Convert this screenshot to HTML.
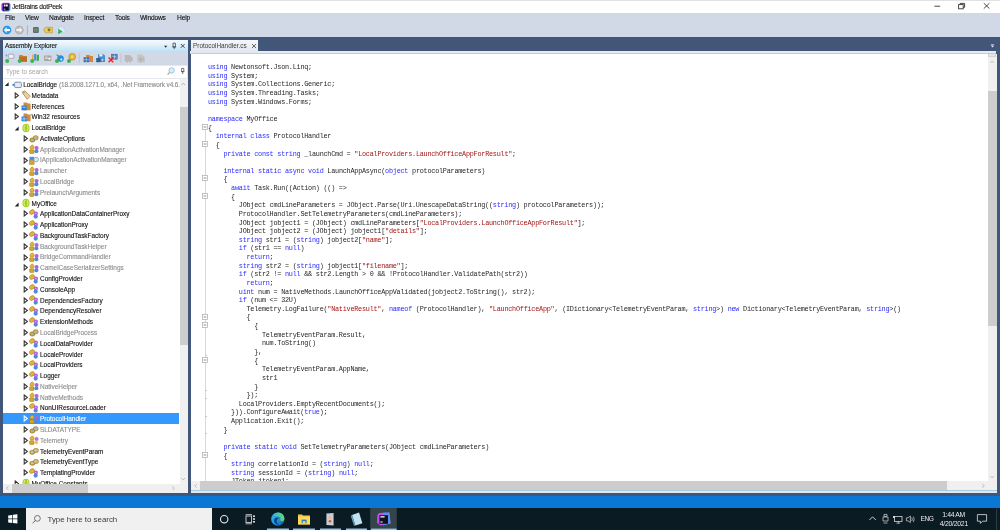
<!DOCTYPE html><html><head><meta charset="utf-8"><style>
*{margin:0;padding:0;box-sizing:border-box}
html,body{width:1000px;height:530px;overflow:hidden;background:#fff;font-family:"Liberation Sans",sans-serif;position:relative}
#root{left:0;top:0;width:1000px;height:530px;overflow:hidden;filter:blur(0.3px)}
div{position:absolute}
#title{left:0;top:0;width:1000px;height:12.7px;background:#fff;border-top:1.2px solid #e2e2e2}
#title .tx{left:12px;top:0.6px;font-size:6.7px;line-height:10px;color:#111;letter-spacing:-0.24px;-webkit-text-stroke:0.1px #111}
#menu{left:0;top:13px;width:1000px;height:24px;background:#d1d8e6}
.mi{top:0.4px;font-size:6.7px;line-height:10px;color:#111;letter-spacing:-0.2px;-webkit-text-stroke:0.1px #111}
#frame{left:0;top:37px;width:1000px;height:460px;background:#42567a}
#panel{left:3px;top:40px;width:185px;height:452.6px;background:#fff}
#ph{left:0;top:0;width:185px;height:11px;background:linear-gradient(#f6fafd,#eaf5fc 30%,#bfe3f8)}
#ph .tx{left:2px;top:0.8px;font-size:6.5px;line-height:10px;color:#111;letter-spacing:-0.12px;-webkit-text-stroke:0.1px #111}
#ptb{left:0;top:11px;width:185px;height:13.7px;background:#d1d8e6}
#psearch{left:0;top:24.7px;width:185px;height:14.5px;background:#fff;border-top:1.8px solid #e4e8ee;border-bottom:1.4px solid #e4e8ee;border-right:1.8px solid #dfe4ec}
#psearch .tx{left:3px;top:1.6px;font-size:6.4px;line-height:9px;color:#a6a6a6}
#tree{left:0;top:39px;width:176.5px;height:404.6px;overflow:hidden}
.tr{left:-3px;width:179px;height:10.78px;top:0}
.tr.sel{background:#3399ff}
.tt{top:0.8px;font-size:6.45px;line-height:10.78px;color:#111;white-space:nowrap;-webkit-text-stroke:0.12px currentColor}
.g .tt{color:#8d8d8d}
.sel .tt{color:#fff}
.gv{color:#8d8d8d;letter-spacing:-0.12px}
.ex{top:1.9px;width:6px;height:7px}
.ex svg{position:absolute;left:0;top:0}
.exc{left:1px;top:0;width:0;height:0;border-left:3.5px solid #555;border-top:2.6px solid transparent;border-bottom:2.6px solid transparent}
.exc:after{content:"";position:absolute;left:-2.7px;top:-1.3px;width:0;height:0;border-left:1.8px solid #fff;border-top:1.3px solid transparent;border-bottom:1.3px solid transparent}
.sel .exc:after{border-left-color:#3399ff}
.exo{left:0;top:0.5px;width:0;height:0;border-right:4px solid #333;border-top:4px solid transparent}
.ic{position:absolute;top:0.4px;width:10px;height:10px}
.ic-cls{background:radial-gradient(circle at 30% 35%,#e8b94a 0 35%,transparent 36%),radial-gradient(circle at 70% 65%,#8a6fd0 0 30%,transparent 31%),linear-gradient(#e0a93a,#c88a20);border-radius:2px;opacity:.85}
.ic-pcls{background:radial-gradient(circle at 28% 30%,#e9b846 0 38%,transparent 39%),radial-gradient(circle at 68% 68%,#6f7ee0 0 32%,transparent 33%);}
.ic-itf{background:linear-gradient(#6ea6e6,#4a7cc7);border-radius:2px;opacity:.8}
.ic-str{background:linear-gradient(#cda24a,#a97b25);border-radius:1px;transform:skewX(-15deg) scale(.8,.7)}
.ic-enm{background:linear-gradient(#d6b060,#b08a30);border-radius:2px;transform:scale(.8,.6)}
.ic-ns{width:7px;height:8px;margin-left:1px;background:#a8d13a;border-radius:50%}
.ic-asm{background:linear-gradient(#e6ecf4,#b9c6d8);border:1px solid #7f91ab;border-radius:1px;transform:scale(.8,.7)}
.ic-tag{background:linear-gradient(135deg,#e9d3a8,#c9a56b);transform:rotate(45deg) scale(.6,.8)}
.ic-ref{background:linear-gradient(90deg,#2f7be0 0 55%,#d09a45 55%)}
.ic-res{background:linear-gradient(90deg,#2f7be0 0 55%,#d09a45 55%)}
#pvs{left:176.5px;top:39.2px;width:8.5px;height:404.4px;background:#f0f0f0}
#pvs .th{left:0;top:28px;width:8px;height:238px;background:#cdcdcd}
#phs{left:0;top:443.6px;width:176.5px;height:9px;background:#f0f0f0}
#phs .th{left:8.8px;top:0;width:75.8px;height:9px;background:#cdcdcd}
#pcorner{left:176.5px;top:443.6px;width:8.5px;height:9px;background:#f0f0f0}
#editor{left:191px;top:40px;width:805px;height:452px;background:#fff}
#tab{left:0;top:0;width:67px;height:13px;background:linear-gradient(#f5f7fb,#dfe5ee)}
#tab .tx{left:2px;top:0.8px;font-size:6.4px;line-height:9px;color:#3c3c3c}
#tabline{left:-1px;top:10.5px;width:806px;height:3.5px;background:linear-gradient(#e6eaf1 0 55%,#b6d1e3 55%)}
#tabstrip{left:67px;top:0;width:738px;height:10.5px;background:#42567a}
#codewrap{left:0;top:0;width:1000px;height:530px}
.cl{font-family:"Liberation Mono",monospace;font-size:6.8px;letter-spacing:-0.23px;line-height:8px;white-space:pre;color:#262626}
.cl b{font-weight:normal;color:#2b2bff}
.cl i{font-style:normal;color:#a31515}
#gline{left:204.6px;top:127px;width:1px;height:354px;background:#d8d8d8}
.tk{left:205px;width:2px;height:0.8px;background:#c8c8c8}
.fb{position:absolute;left:202.1px;width:6px;height:6px}
#evs{left:987.6px;top:54px;width:9px;height:427px;background:#f0f0f0}
#evs .th{left:0;top:36.5px;width:9px;height:235px;background:#cdcdcd}
#ehs{left:191px;top:481.2px;width:805.6px;height:8.6px;background:#f0f0f0}
#ehs .th{left:9px;top:0;width:747px;height:9px;background:#cdcdcd}
#ebl{left:191px;top:489.8px;width:805.6px;height:3.2px;background:linear-gradient(#a9cbe2 0 40%,#e2e8f0 40%)}
#bluebar{left:0;top:495.6px;width:1000px;height:13px;background:#0a77d4}
#taskbar{left:0;top:508.3px;width:1000px;height:22px;background:#0b1b23}
#search{left:26px;top:0;width:185.5px;height:22px;background:#f0f0f0}
#search .tx{left:21.5px;top:6.6px;font-size:7.9px;line-height:10px;color:#3c3c3c}
</style></head><body><div id="root"><svg width="0" height="0" style="position:absolute"><defs>
<symbol id="i-asm" viewBox="0 0 10 10"><rect x="2.6" y="2.2" width="6.8" height="5.4" rx="1.2" fill="#e3ebf5" stroke="#6f86a8" stroke-width="0.9"/><circle cx="1.3" cy="4.9" r="1.1" fill="#3d9be0"/></symbol>
<symbol id="i-tag" viewBox="0 0 10 10"><path d="M1 2.2 L4 0.8 L9.3 6.2 L6.2 9.3 Z" fill="#e6d0a4" stroke="#a88554" stroke-width="0.8"/><circle cx="3" cy="2.6" r="0.7" fill="#a88554"/></symbol>
<symbol id="i-ref" viewBox="0 0 10 10"><path d="M2.5 1.5 H6 L6.8 2.5 H9.6 V9.2 H2.5 Z" fill="#d18b3a"/><rect x="0.5" y="4.5" width="5.2" height="4.8" fill="#2f7fe0"/><rect x="1.5" y="5.8" width="3.2" height="0.8" fill="#bfe0ff"/></symbol>
<symbol id="i-res" viewBox="0 0 10 10"><path d="M2.5 1.5 H6 L6.8 2.5 H9.6 V9.2 H2.5 Z" fill="#d18b3a"/><rect x="0.5" y="4.5" width="5.2" height="4.8" fill="#2f7fe0"/><path d="M3.1 4.8 V9.2 M0.8 6.9 H5.5" stroke="#d8ecff" stroke-width="0.6"/></symbol>
<symbol id="i-ns" viewBox="0 0 10 10"><ellipse cx="5" cy="5" rx="3.6" ry="4.3" fill="#a9cf1f"/><path d="M4.2 2.2 Q3 2.4 3.3 3.8 Q3.4 4.8 2.6 5 Q3.4 5.2 3.3 6.2 Q3 7.6 4.2 7.8 M5.8 2.2 Q7 2.4 6.7 3.8 Q6.6 4.8 7.4 5 Q6.6 5.2 6.7 6.2 Q7 7.6 5.8 7.8" fill="none" stroke="#f4ffd0" stroke-width="0.7"/></symbol>
<symbol id="i-str" viewBox="0 0 10 10"><rect x="0.8" y="4" width="5" height="4" rx="2" fill="#c9a347" stroke="#94701f" stroke-width="0.7"/><rect x="4.2" y="1.8" width="5" height="4" rx="2" fill="#d9b95c" stroke="#94701f" stroke-width="0.7"/><rect x="5.4" y="3" width="2.6" height="1.6" fill="#9fb7c9"/><rect x="2" y="5.2" width="2.6" height="1.6" fill="#9fb7c9"/></symbol>
<symbol id="i-enm" viewBox="0 0 10 10"><rect x="0.8" y="4.4" width="5" height="3.8" rx="1.6" fill="#c9a347" stroke="#94701f" stroke-width="0.6"/><rect x="4.4" y="2.6" width="5" height="3.8" rx="1.6" fill="#d6b65a" stroke="#94701f" stroke-width="0.6"/><rect x="5.6" y="3.6" width="2.6" height="1.6" fill="#b9c9d4"/><rect x="2" y="5.4" width="2.6" height="1.6" fill="#b9c9d4"/></symbol>
<symbol id="i-cls" viewBox="0 0 10 10"><path d="M0.8 3 L3 0.8 L5.2 2.6 L4.6 4.8 L1.6 5 Z" fill="#e4b63c" stroke="#a77d12" stroke-width="0.55"/><rect x="0.6" y="5.8" width="4.4" height="3.6" rx="0.6" fill="#d6a62e" stroke="#a77d12" stroke-width="0.55"/><circle cx="7.6" cy="3.9" r="2" fill="#b85ddd"/><circle cx="7.4" cy="7.3" r="2" fill="#4f89d8"/></symbol>
<symbol id="i-pcls" viewBox="0 0 10 10"><ellipse cx="3" cy="3" rx="2.7" ry="2.1" transform="rotate(-35 3 3)" fill="#e2b43a" stroke="#a77d12" stroke-width="0.55"/><circle cx="6.9" cy="4.6" r="2.1" fill="#b85ddd"/><circle cx="6.7" cy="7.6" r="2.1" fill="#4f89d8"/><circle cx="6.9" cy="4.6" r="0.7" fill="#e6c4f2"/></symbol>
<symbol id="i-itf" viewBox="0 0 10 10"><rect x="0.5" y="1.8" width="4.6" height="3.6" fill="#4f8fdc"/><rect x="0.5" y="5.6" width="4.6" height="3.8" fill="#d3a42c" stroke="#a77d12" stroke-width="0.5"/><circle cx="7.2" cy="4.6" r="2.3" fill="#dfe6ee" stroke="#8a9db3" stroke-width="0.8"/></symbol>
<symbol id="i-ctl" viewBox="0 0 10 10"><path d="M0.8 3 L3 0.8 L5.2 2.6 L4.6 4.8 L1.6 5 Z" fill="#e4b63c" stroke="#a77d12" stroke-width="0.55"/><rect x="0.6" y="5.8" width="4.4" height="3.6" rx="0.6" fill="#d6a62e" stroke="#a77d12" stroke-width="0.55"/><circle cx="7.6" cy="3.9" r="2" fill="#c66ae0"/><path d="M7.4 5.4 L9.4 7.4 L7.4 9.4 L5.4 7.4 Z" fill="#e7c23a"/></symbol>
</defs></svg><div id="title"><svg style="position:absolute;left:1px;top:1px" width="10" height="10" viewBox="0 0 10 10"><defs><linearGradient id="dpg" x1="0" y1="0" x2="1" y2="1"><stop offset="0" stop-color="#d23cf0"/><stop offset="0.5" stop-color="#7a3cf0"/><stop offset="1" stop-color="#21b6f2"/></linearGradient></defs><path d="M1.6 0.8 H8.2 L9.4 2.4 V8 L7.6 9.6 H1.8 L0.4 8 V2.2 Z" fill="url(#dpg)"/><rect x="1.8" y="1.8" width="6" height="6.6" fill="#0e0a1a"/><path d="M2.8 2.6 H4.6 V4.6 H2.8 Z M5 2.6 H6.8 V4.6 H5 Z M2.8 6.8 H4.4 V7.4 H2.8 Z" fill="#f0f0f0"/></svg><div class="tx">JetBrains dotPeek</div></div><div id="menu"><div class="mi" style="left:5px">File</div><div class="mi" style="left:25px">View</div><div class="mi" style="left:49px">Navigate</div><div class="mi" style="left:84px">Inspect</div><div class="mi" style="left:115px">Tools</div><div class="mi" style="left:140px">Windows</div><div class="mi" style="left:177px">Help</div></div><div id="frame"></div><div id="panel"><div id="ph"><div class="tx">Assembly Explorer</div></div><div id="ptb"></div><div id="psearch"><div class="tx">Type to search</div></div><div id="tree"><div class="tr" style="top:0.21px"><div class="ex" style="left:4.2px"><svg width="6" height="7" viewBox="0 0 6 7"><path d="M4.6 1.2 L4.6 5.0 L0.8 5.0 Z" fill="#222"/></svg></div><svg class="ic" style="left:12.0px" width="10" height="10" viewBox="0 0 10 10"><use href="#i-asm"/></svg><div class="tt" style="left:23.2px">LocalBridge <span class="gv">(18.2008.1271.0, x64, .Net Framework v4.6.1</span></div></div><div class="tr" style="top:10.99px"><div class="ex" style="left:14.0px"><svg width="6" height="7" viewBox="0 0 6 7"><path d="M1.2 1 L4.4 3.5 L1.2 6 Z" fill="none" stroke="#333" stroke-width="1.05"/></svg></div><svg class="ic" style="left:20.5px" width="10" height="10" viewBox="0 0 10 10"><use href="#i-tag"/></svg><div class="tt" style="left:31.6px">Metadata</div></div><div class="tr" style="top:21.77px"><div class="ex" style="left:14.0px"><svg width="6" height="7" viewBox="0 0 6 7"><path d="M1.2 1 L4.4 3.5 L1.2 6 Z" fill="none" stroke="#333" stroke-width="1.05"/></svg></div><svg class="ic" style="left:20.5px" width="10" height="10" viewBox="0 0 10 10"><use href="#i-ref"/></svg><div class="tt" style="left:31.6px">References</div></div><div class="tr" style="top:32.55px"><div class="ex" style="left:14.0px"><svg width="6" height="7" viewBox="0 0 6 7"><path d="M1.2 1 L4.4 3.5 L1.2 6 Z" fill="none" stroke="#333" stroke-width="1.05"/></svg></div><svg class="ic" style="left:20.5px" width="10" height="10" viewBox="0 0 10 10"><use href="#i-res"/></svg><div class="tt" style="left:31.6px">Win32 resources</div></div><div class="tr" style="top:43.33px"><div class="ex" style="left:14.0px"><svg width="6" height="7" viewBox="0 0 6 7"><path d="M4.6 2.6 L4.6 6.4 L0.8 6.4 Z" fill="#222"/></svg></div><svg class="ic" style="left:20.5px" width="10" height="10" viewBox="0 0 10 10"><use href="#i-ns"/></svg><div class="tt" style="left:31.6px">LocalBridge</div></div><div class="tr" style="top:54.11px"><div class="ex" style="left:22.5px"><svg width="6" height="7" viewBox="0 0 6 7"><path d="M1.2 1 L4.4 3.5 L1.2 6 Z" fill="none" stroke="#333" stroke-width="1.05"/></svg></div><svg class="ic" style="left:29.0px" width="10" height="10" viewBox="0 0 10 10"><use href="#i-str"/></svg><div class="tt" style="left:40.0px">ActivateOptions</div></div><div class="tr g" style="top:64.89px"><div class="ex" style="left:22.5px"><svg width="6" height="7" viewBox="0 0 6 7"><path d="M1.2 1 L4.4 3.5 L1.2 6 Z" fill="none" stroke="#333" stroke-width="1.05"/></svg></div><svg class="ic" style="left:29.0px" width="10" height="10" viewBox="0 0 10 10"><use href="#i-cls"/></svg><div class="tt" style="left:40.0px">ApplicationActivationManager</div></div><div class="tr g" style="top:75.67px"><div class="ex" style="left:22.5px"><svg width="6" height="7" viewBox="0 0 6 7"><path d="M1.2 1 L4.4 3.5 L1.2 6 Z" fill="none" stroke="#333" stroke-width="1.05"/></svg></div><svg class="ic" style="left:29.0px" width="10" height="10" viewBox="0 0 10 10"><use href="#i-itf"/></svg><div class="tt" style="left:40.0px">IApplicationActivationManager</div></div><div class="tr g" style="top:86.45px"><div class="ex" style="left:22.5px"><svg width="6" height="7" viewBox="0 0 6 7"><path d="M1.2 1 L4.4 3.5 L1.2 6 Z" fill="none" stroke="#333" stroke-width="1.05"/></svg></div><svg class="ic" style="left:29.0px" width="10" height="10" viewBox="0 0 10 10"><use href="#i-cls"/></svg><div class="tt" style="left:40.0px">Launcher</div></div><div class="tr g" style="top:97.23px"><div class="ex" style="left:22.5px"><svg width="6" height="7" viewBox="0 0 6 7"><path d="M1.2 1 L4.4 3.5 L1.2 6 Z" fill="none" stroke="#333" stroke-width="1.05"/></svg></div><svg class="ic" style="left:29.0px" width="10" height="10" viewBox="0 0 10 10"><use href="#i-cls"/></svg><div class="tt" style="left:40.0px">LocalBridge</div></div><div class="tr g" style="top:108.01px"><div class="ex" style="left:22.5px"><svg width="6" height="7" viewBox="0 0 6 7"><path d="M1.2 1 L4.4 3.5 L1.2 6 Z" fill="none" stroke="#333" stroke-width="1.05"/></svg></div><svg class="ic" style="left:29.0px" width="10" height="10" viewBox="0 0 10 10"><use href="#i-cls"/></svg><div class="tt" style="left:40.0px">PrelaunchArguments</div></div><div class="tr" style="top:118.79px"><div class="ex" style="left:14.0px"><svg width="6" height="7" viewBox="0 0 6 7"><path d="M4.6 2.6 L4.6 6.4 L0.8 6.4 Z" fill="#222"/></svg></div><svg class="ic" style="left:20.5px" width="10" height="10" viewBox="0 0 10 10"><use href="#i-ns"/></svg><div class="tt" style="left:31.6px">MyOffice</div></div><div class="tr" style="top:129.57px"><div class="ex" style="left:22.5px"><svg width="6" height="7" viewBox="0 0 6 7"><path d="M1.2 1 L4.4 3.5 L1.2 6 Z" fill="none" stroke="#333" stroke-width="1.05"/></svg></div><svg class="ic" style="left:29.0px" width="10" height="10" viewBox="0 0 10 10"><use href="#i-pcls"/></svg><div class="tt" style="left:40.0px">ApplicationDataContainerProxy</div></div><div class="tr" style="top:140.35px"><div class="ex" style="left:22.5px"><svg width="6" height="7" viewBox="0 0 6 7"><path d="M1.2 1 L4.4 3.5 L1.2 6 Z" fill="none" stroke="#333" stroke-width="1.05"/></svg></div><svg class="ic" style="left:29.0px" width="10" height="10" viewBox="0 0 10 10"><use href="#i-pcls"/></svg><div class="tt" style="left:40.0px">ApplicationProxy</div></div><div class="tr" style="top:151.13px"><div class="ex" style="left:22.5px"><svg width="6" height="7" viewBox="0 0 6 7"><path d="M1.2 1 L4.4 3.5 L1.2 6 Z" fill="none" stroke="#333" stroke-width="1.05"/></svg></div><svg class="ic" style="left:29.0px" width="10" height="10" viewBox="0 0 10 10"><use href="#i-pcls"/></svg><div class="tt" style="left:40.0px">BackgroundTaskFactory</div></div><div class="tr g" style="top:161.91px"><div class="ex" style="left:22.5px"><svg width="6" height="7" viewBox="0 0 6 7"><path d="M1.2 1 L4.4 3.5 L1.2 6 Z" fill="none" stroke="#333" stroke-width="1.05"/></svg></div><svg class="ic" style="left:29.0px" width="10" height="10" viewBox="0 0 10 10"><use href="#i-cls"/></svg><div class="tt" style="left:40.0px">BackgroundTaskHelper</div></div><div class="tr g" style="top:172.69px"><div class="ex" style="left:22.5px"><svg width="6" height="7" viewBox="0 0 6 7"><path d="M1.2 1 L4.4 3.5 L1.2 6 Z" fill="none" stroke="#333" stroke-width="1.05"/></svg></div><svg class="ic" style="left:29.0px" width="10" height="10" viewBox="0 0 10 10"><use href="#i-cls"/></svg><div class="tt" style="left:40.0px">BridgeCommandHandler</div></div><div class="tr g" style="top:183.47px"><div class="ex" style="left:22.5px"><svg width="6" height="7" viewBox="0 0 6 7"><path d="M1.2 1 L4.4 3.5 L1.2 6 Z" fill="none" stroke="#333" stroke-width="1.05"/></svg></div><svg class="ic" style="left:29.0px" width="10" height="10" viewBox="0 0 10 10"><use href="#i-cls"/></svg><div class="tt" style="left:40.0px">CamelCaseSerializerSettings</div></div><div class="tr" style="top:194.25px"><div class="ex" style="left:22.5px"><svg width="6" height="7" viewBox="0 0 6 7"><path d="M1.2 1 L4.4 3.5 L1.2 6 Z" fill="none" stroke="#333" stroke-width="1.05"/></svg></div><svg class="ic" style="left:29.0px" width="10" height="10" viewBox="0 0 10 10"><use href="#i-pcls"/></svg><div class="tt" style="left:40.0px">ConfigProvider</div></div><div class="tr" style="top:205.03px"><div class="ex" style="left:22.5px"><svg width="6" height="7" viewBox="0 0 6 7"><path d="M1.2 1 L4.4 3.5 L1.2 6 Z" fill="none" stroke="#333" stroke-width="1.05"/></svg></div><svg class="ic" style="left:29.0px" width="10" height="10" viewBox="0 0 10 10"><use href="#i-pcls"/></svg><div class="tt" style="left:40.0px">ConsoleApp</div></div><div class="tr" style="top:215.81px"><div class="ex" style="left:22.5px"><svg width="6" height="7" viewBox="0 0 6 7"><path d="M1.2 1 L4.4 3.5 L1.2 6 Z" fill="none" stroke="#333" stroke-width="1.05"/></svg></div><svg class="ic" style="left:29.0px" width="10" height="10" viewBox="0 0 10 10"><use href="#i-pcls"/></svg><div class="tt" style="left:40.0px">DependenciesFactory</div></div><div class="tr" style="top:226.59px"><div class="ex" style="left:22.5px"><svg width="6" height="7" viewBox="0 0 6 7"><path d="M1.2 1 L4.4 3.5 L1.2 6 Z" fill="none" stroke="#333" stroke-width="1.05"/></svg></div><svg class="ic" style="left:29.0px" width="10" height="10" viewBox="0 0 10 10"><use href="#i-pcls"/></svg><div class="tt" style="left:40.0px">DependencyResolver</div></div><div class="tr" style="top:237.37px"><div class="ex" style="left:22.5px"><svg width="6" height="7" viewBox="0 0 6 7"><path d="M1.2 1 L4.4 3.5 L1.2 6 Z" fill="none" stroke="#333" stroke-width="1.05"/></svg></div><svg class="ic" style="left:29.0px" width="10" height="10" viewBox="0 0 10 10"><use href="#i-pcls"/></svg><div class="tt" style="left:40.0px">ExtensionMethods</div></div><div class="tr g" style="top:248.15px"><div class="ex" style="left:22.5px"><svg width="6" height="7" viewBox="0 0 6 7"><path d="M1.2 1 L4.4 3.5 L1.2 6 Z" fill="none" stroke="#333" stroke-width="1.05"/></svg></div><svg class="ic" style="left:29.0px" width="10" height="10" viewBox="0 0 10 10"><use href="#i-str"/></svg><div class="tt" style="left:40.0px">LocalBridgeProcess</div></div><div class="tr" style="top:258.93px"><div class="ex" style="left:22.5px"><svg width="6" height="7" viewBox="0 0 6 7"><path d="M1.2 1 L4.4 3.5 L1.2 6 Z" fill="none" stroke="#333" stroke-width="1.05"/></svg></div><svg class="ic" style="left:29.0px" width="10" height="10" viewBox="0 0 10 10"><use href="#i-pcls"/></svg><div class="tt" style="left:40.0px">LocalDataProvider</div></div><div class="tr" style="top:269.71px"><div class="ex" style="left:22.5px"><svg width="6" height="7" viewBox="0 0 6 7"><path d="M1.2 1 L4.4 3.5 L1.2 6 Z" fill="none" stroke="#333" stroke-width="1.05"/></svg></div><svg class="ic" style="left:29.0px" width="10" height="10" viewBox="0 0 10 10"><use href="#i-pcls"/></svg><div class="tt" style="left:40.0px">LocaleProvider</div></div><div class="tr" style="top:280.49px"><div class="ex" style="left:22.5px"><svg width="6" height="7" viewBox="0 0 6 7"><path d="M1.2 1 L4.4 3.5 L1.2 6 Z" fill="none" stroke="#333" stroke-width="1.05"/></svg></div><svg class="ic" style="left:29.0px" width="10" height="10" viewBox="0 0 10 10"><use href="#i-pcls"/></svg><div class="tt" style="left:40.0px">LocalProviders</div></div><div class="tr" style="top:291.27px"><div class="ex" style="left:22.5px"><svg width="6" height="7" viewBox="0 0 6 7"><path d="M1.2 1 L4.4 3.5 L1.2 6 Z" fill="none" stroke="#333" stroke-width="1.05"/></svg></div><svg class="ic" style="left:29.0px" width="10" height="10" viewBox="0 0 10 10"><use href="#i-pcls"/></svg><div class="tt" style="left:40.0px">Logger</div></div><div class="tr g" style="top:302.05px"><div class="ex" style="left:22.5px"><svg width="6" height="7" viewBox="0 0 6 7"><path d="M1.2 1 L4.4 3.5 L1.2 6 Z" fill="none" stroke="#333" stroke-width="1.05"/></svg></div><svg class="ic" style="left:29.0px" width="10" height="10" viewBox="0 0 10 10"><use href="#i-cls"/></svg><div class="tt" style="left:40.0px">NativeHelper</div></div><div class="tr g" style="top:312.83px"><div class="ex" style="left:22.5px"><svg width="6" height="7" viewBox="0 0 6 7"><path d="M1.2 1 L4.4 3.5 L1.2 6 Z" fill="none" stroke="#333" stroke-width="1.05"/></svg></div><svg class="ic" style="left:29.0px" width="10" height="10" viewBox="0 0 10 10"><use href="#i-cls"/></svg><div class="tt" style="left:40.0px">NativeMethods</div></div><div class="tr" style="top:323.61px"><div class="ex" style="left:22.5px"><svg width="6" height="7" viewBox="0 0 6 7"><path d="M1.2 1 L4.4 3.5 L1.2 6 Z" fill="none" stroke="#333" stroke-width="1.05"/></svg></div><svg class="ic" style="left:29.0px" width="10" height="10" viewBox="0 0 10 10"><use href="#i-pcls"/></svg><div class="tt" style="left:40.0px">NonUIResourceLoader</div></div><div class="tr sel" style="top:334.39px"><div class="ex" style="left:22.5px"><svg width="6" height="7" viewBox="0 0 6 7"><path d="M1.2 1 L4.4 3.5 L1.2 6 Z" fill="none" stroke="#fff" stroke-width="1.05"/></svg></div><svg class="ic" style="left:29.0px" width="10" height="10" viewBox="0 0 10 10"><use href="#i-cls"/></svg><div class="tt" style="left:40.0px">ProtocolHandler</div></div><div class="tr g" style="top:345.17px"><div class="ex" style="left:22.5px"><svg width="6" height="7" viewBox="0 0 6 7"><path d="M1.2 1 L4.4 3.5 L1.2 6 Z" fill="none" stroke="#333" stroke-width="1.05"/></svg></div><svg class="ic" style="left:29.0px" width="10" height="10" viewBox="0 0 10 10"><use href="#i-str"/></svg><div class="tt" style="left:40.0px">SLDATATYPE</div></div><div class="tr g" style="top:355.95px"><div class="ex" style="left:22.5px"><svg width="6" height="7" viewBox="0 0 6 7"><path d="M1.2 1 L4.4 3.5 L1.2 6 Z" fill="none" stroke="#333" stroke-width="1.05"/></svg></div><svg class="ic" style="left:29.0px" width="10" height="10" viewBox="0 0 10 10"><use href="#i-ctl"/></svg><div class="tt" style="left:40.0px">Telemetry</div></div><div class="tr" style="top:366.73px"><div class="ex" style="left:22.5px"><svg width="6" height="7" viewBox="0 0 6 7"><path d="M1.2 1 L4.4 3.5 L1.2 6 Z" fill="none" stroke="#333" stroke-width="1.05"/></svg></div><svg class="ic" style="left:29.0px" width="10" height="10" viewBox="0 0 10 10"><use href="#i-enm"/></svg><div class="tt" style="left:40.0px">TelemetryEventParam</div></div><div class="tr" style="top:377.51px"><div class="ex" style="left:22.5px"><svg width="6" height="7" viewBox="0 0 6 7"><path d="M1.2 1 L4.4 3.5 L1.2 6 Z" fill="none" stroke="#333" stroke-width="1.05"/></svg></div><svg class="ic" style="left:29.0px" width="10" height="10" viewBox="0 0 10 10"><use href="#i-enm"/></svg><div class="tt" style="left:40.0px">TelemetryEventType</div></div><div class="tr" style="top:388.29px"><div class="ex" style="left:22.5px"><svg width="6" height="7" viewBox="0 0 6 7"><path d="M1.2 1 L4.4 3.5 L1.2 6 Z" fill="none" stroke="#333" stroke-width="1.05"/></svg></div><svg class="ic" style="left:29.0px" width="10" height="10" viewBox="0 0 10 10"><use href="#i-pcls"/></svg><div class="tt" style="left:40.0px">TemplatingProvider</div></div><div class="tr" style="top:399.07px"><div class="ex" style="left:14.0px"><svg width="6" height="7" viewBox="0 0 6 7"><path d="M1.2 1 L4.4 3.5 L1.2 6 Z" fill="none" stroke="#333" stroke-width="1.05"/></svg></div><svg class="ic" style="left:20.5px" width="10" height="10" viewBox="0 0 10 10"><use href="#i-ns"/></svg><div class="tt" style="left:31.6px">MyOffice.Constants</div></div></div><div id="pvs"><div class="th"></div></div><div id="phs"><div class="th"></div></div><div id="pcorner"></div></div><div id="editor"><div id="tabstrip"></div><div id="tabline"></div><div id="tab"><div class="tx">ProtocolHandler.cs</div><svg style="position:absolute;left:59.6px;top:2.8px" width="6" height="6" viewBox="0 0 6 6"><path d="M1 1 L5 5 M5 1 L1 5" stroke="#555" stroke-width="0.9"/></svg></div></div><div id="gline"></div><svg class="fb" style="top:123.71px" width="6" height="6" viewBox="0 0 6 6"><rect x="0.5" y="0.5" width="5" height="5" fill="#fff" stroke="#b4b4b4" stroke-width="0.8"/><path d="M1.6 3 H4.4" stroke="#777" stroke-width="0.8"/></svg><svg class="fb" style="top:140.97px" width="6" height="6" viewBox="0 0 6 6"><rect x="0.5" y="0.5" width="5" height="5" fill="#fff" stroke="#b4b4b4" stroke-width="0.8"/><path d="M1.6 3 H4.4" stroke="#777" stroke-width="0.8"/></svg><svg class="fb" style="top:175.49px" width="6" height="6" viewBox="0 0 6 6"><rect x="0.5" y="0.5" width="5" height="5" fill="#fff" stroke="#b4b4b4" stroke-width="0.8"/><path d="M1.6 3 H4.4" stroke="#777" stroke-width="0.8"/></svg><svg class="fb" style="top:192.75px" width="6" height="6" viewBox="0 0 6 6"><rect x="0.5" y="0.5" width="5" height="5" fill="#fff" stroke="#b4b4b4" stroke-width="0.8"/><path d="M1.6 3 H4.4" stroke="#777" stroke-width="0.8"/></svg><svg class="fb" style="top:313.57px" width="6" height="6" viewBox="0 0 6 6"><rect x="0.5" y="0.5" width="5" height="5" fill="#fff" stroke="#b4b4b4" stroke-width="0.8"/><path d="M1.6 3 H4.4" stroke="#777" stroke-width="0.8"/></svg><svg class="fb" style="top:322.20px" width="6" height="6" viewBox="0 0 6 6"><rect x="0.5" y="0.5" width="5" height="5" fill="#fff" stroke="#b4b4b4" stroke-width="0.8"/><path d="M1.6 3 H4.4" stroke="#777" stroke-width="0.8"/></svg><svg class="fb" style="top:356.72px" width="6" height="6" viewBox="0 0 6 6"><rect x="0.5" y="0.5" width="5" height="5" fill="#fff" stroke="#b4b4b4" stroke-width="0.8"/><path d="M1.6 3 H4.4" stroke="#777" stroke-width="0.8"/></svg><svg class="fb" style="top:451.65px" width="6" height="6" viewBox="0 0 6 6"><rect x="0.5" y="0.5" width="5" height="5" fill="#fff" stroke="#b4b4b4" stroke-width="0.8"/><path d="M1.6 3 H4.4" stroke="#777" stroke-width="0.8"/></svg><div class="tk" style="top:355.09px"></div><div class="tk" style="top:389.61px"></div><div class="tk" style="top:398.24px"></div><div class="tk" style="top:415.50px"></div><div class="tk" style="top:432.76px"></div><div id="codewrap"><div class="cl" style="top:63.20px;left:208.00px"><b>using</b> Newtonsoft.Json.Linq;</div><div class="cl" style="top:71.83px;left:208.00px"><b>using</b> System;</div><div class="cl" style="top:80.46px;left:208.00px"><b>using</b> System.Collections.Generic;</div><div class="cl" style="top:89.09px;left:208.00px"><b>using</b> System.Threading.Tasks;</div><div class="cl" style="top:97.72px;left:208.00px"><b>using</b> System.Windows.Forms;</div><div class="cl" style="top:114.98px;left:208.00px"><b>namespace</b> MyOffice</div><div class="cl" style="top:123.61px;left:208.00px">{</div><div class="cl" style="top:132.24px;left:215.70px"><b>internal</b> <b>class</b> ProtocolHandler</div><div class="cl" style="top:140.87px;left:215.70px">{</div><div class="cl" style="top:149.50px;left:223.40px"><b>private</b> <b>const</b> <b>string</b> _launchCmd = <i>&quot;LocalProviders.LaunchOfficeAppForResult&quot;</i>;</div><div class="cl" style="top:166.76px;left:223.40px"><b>internal</b> <b>static</b> <b>async</b> <b>void</b> LaunchAppAsync(<b>object</b> protocolParameters)</div><div class="cl" style="top:175.39px;left:223.40px">{</div><div class="cl" style="top:184.02px;left:231.10px"><b>await</b> Task.Run((Action) (() =&gt;</div><div class="cl" style="top:192.65px;left:231.10px">{</div><div class="cl" style="top:201.28px;left:238.80px">JObject cmdLineParameters = JObject.Parse(Uri.UnescapeDataString((<b>string</b>) protocolParameters));</div><div class="cl" style="top:209.91px;left:238.80px">ProtocolHandler.SetTelemetryParameters(cmdLineParameters);</div><div class="cl" style="top:218.54px;left:238.80px">JObject jobject1 = (JObject) cmdLineParameters[<i>&quot;LocalProviders.LaunchOfficeAppForResult&quot;</i>];</div><div class="cl" style="top:227.17px;left:238.80px">JObject jobject2 = (JObject) jobject1[<i>&quot;details&quot;</i>];</div><div class="cl" style="top:235.80px;left:238.80px"><b>string</b> str1 = (<b>string</b>) jobject2[<i>&quot;name&quot;</i>];</div><div class="cl" style="top:244.43px;left:238.80px"><b>if</b> (str1 == <b>null</b>)</div><div class="cl" style="top:253.06px;left:246.50px"><b>return</b>;</div><div class="cl" style="top:261.69px;left:238.80px"><b>string</b> str2 = (<b>string</b>) jobject1[<i>&quot;filename&quot;</i>];</div><div class="cl" style="top:270.32px;left:238.80px"><b>if</b> (str2 != <b>null</b> &amp;&amp; str2.Length &gt; 0 &amp;&amp; !ProtocolHandler.ValidatePath(str2))</div><div class="cl" style="top:278.95px;left:246.50px"><b>return</b>;</div><div class="cl" style="top:287.58px;left:238.80px"><b>uint</b> num = NativeMethods.LaunchOfficeAppValidated(jobject2.ToString(), str2);</div><div class="cl" style="top:296.21px;left:238.80px"><b>if</b> (num &lt;= 32U)</div><div class="cl" style="top:304.84px;left:246.50px">Telemetry.LogFailure(<i>&quot;NativeResult&quot;</i>, <b>nameof</b> (ProtocolHandler), <i>&quot;LaunchOfficeApp&quot;</i>, (IDictionary&lt;TelemetryEventParam, <b>string</b>&gt;) <b>new</b> Dictionary&lt;TelemetryEventParam, <b>string</b>&gt;()</div><div class="cl" style="top:313.47px;left:246.50px">{</div><div class="cl" style="top:322.10px;left:254.20px">{</div><div class="cl" style="top:330.73px;left:261.90px">TelemetryEventParam.Result,</div><div class="cl" style="top:339.36px;left:261.90px">num.ToString()</div><div class="cl" style="top:347.99px;left:254.20px">},</div><div class="cl" style="top:356.62px;left:254.20px">{</div><div class="cl" style="top:365.25px;left:261.90px">TelemetryEventParam.AppName,</div><div class="cl" style="top:373.88px;left:261.90px">str1</div><div class="cl" style="top:382.51px;left:254.20px">}</div><div class="cl" style="top:391.14px;left:246.50px">});</div><div class="cl" style="top:399.77px;left:238.80px">LocalProviders.EmptyRecentDocuments();</div><div class="cl" style="top:408.40px;left:231.10px">})).ConfigureAwait(<b>true</b>);</div><div class="cl" style="top:417.03px;left:231.10px">Application.Exit();</div><div class="cl" style="top:425.66px;left:223.40px">}</div><div class="cl" style="top:442.92px;left:223.40px"><b>private</b> <b>static</b> <b>void</b> SetTelemetryParameters(JObject cmdLineParameters)</div><div class="cl" style="top:451.55px;left:223.40px">{</div><div class="cl" style="top:460.18px;left:231.10px"><b>string</b> correlationId = (<b>string</b>) <b>null</b>;</div><div class="cl" style="top:468.81px;left:231.10px"><b>string</b> sessionId = (<b>string</b>) <b>null</b>;</div><div class="cl" style="top:477.44px;left:231.10px">JToken jtoken1;</div></div><div id="evs"><div class="th"></div></div><div id="ehs"><div class="th"></div></div><div id="ebl"></div><svg style="position:absolute;left:930px;top:0" width="70" height="13" viewBox="930 0 70 13"><path d="M934.4 6.2 H940.2" stroke="#333" stroke-width="0.9"/><rect x="958.6" y="4.6" width="4.6" height="4.2" fill="none" stroke="#333" stroke-width="0.9"/><path d="M960.2 4.4 V3.4 H964.6 V7.4 H963.4" fill="none" stroke="#333" stroke-width="0.9"/><path d="M983.8 3.2 L989.4 8.6 M989.4 3.2 L983.8 8.6" stroke="#333" stroke-width="0.9"/></svg><svg style="position:absolute;left:0;top:22px" width="80" height="16" viewBox="0 22 80 16"><circle cx="7" cy="30" r="4.3" fill="#1c8fe0"/><circle cx="7" cy="30" r="3.6" fill="#2aa0ee"/><path d="M3.9 30 L6.7 27.3 V29.1 H9.9 V30.9 H6.7 V32.7 Z" fill="#fff"/><circle cx="19.3" cy="30" r="4.3" fill="#a9a9a9"/><circle cx="19.3" cy="30" r="3.4" fill="#bdbdbd"/><path d="M22.4 30 L19.6 27.3 V29.1 H16.4 V30.9 H19.6 V32.7 Z" fill="#f2f2f2"/><path d="M27.4 25.2 V35" stroke="#9aa3b2" stroke-width="0.7"/><rect x="33" y="27" width="5.8" height="6" rx="1" fill="#56707a"/><path d="M34.8 28.6 V31.6 M36.6 28.6 V31.6" stroke="#a8b86a" stroke-width="0.6"/><path d="M43.6 30 L45.4 27.3 H52.4 V32.8 H45.4 Z" fill="#e8cc5e" stroke="#b8962a" stroke-width="0.6"/><rect x="47.8" y="28.6" width="2.4" height="2.6" fill="#8a7020"/><path d="M57.4 32.6 Q56 32.4 56.2 30.6 Q56.4 28.6 58.4 28.6 Q59 26.2 61.6 26.4 Q64.4 26.8 64.4 29.4 Q65.6 30 65.2 31.6 Q64.8 32.8 63.4 32.6 Z" fill="#dcebfa" stroke="#a9c9ea" stroke-width="0.6"/><path d="M58.2 28.8 L62.6 31.4 L58.2 34.2 Z" fill="#2fb24a"/></svg><svg style="position:absolute;left:160px;top:40px" width="28" height="11" viewBox="160 40 28 11"><path d="M164 45.8 H167.4 L165.7 47.8 Z" fill="#333"/><path d="M173 43.2 H175.4 V47 H173 Z M172.3 47 H176.1 M174.2 47 V49.2" fill="none" stroke="#444" stroke-width="0.8"/><path d="M180.8 44 L184.6 47.8 M184.6 44 L180.8 47.8" stroke="#333" stroke-width="0.9"/></svg><svg style="position:absolute;left:3px;top:51px" width="184" height="14" viewBox="3 51 184 14"><rect x="8.4" y="54.2" width="5.4" height="4.2" rx="0.6" fill="#eef2f8" stroke="#8796ad" stroke-width="0.7"/><circle cx="6.5" cy="55.5" r="0.9" fill="#5aa8e8"/><circle cx="7.2" cy="61" r="2" fill="#3bb54a"/><path d="M19 55 H22.5 L23.3 55.9 H27 V61.8 H19 Z" fill="#d2893a"/><path d="M19 56.6 H27 V61.8 H19 Z" fill="#b96f25"/><circle cx="19.7" cy="61" r="2" fill="#3bb54a"/><rect x="32" y="54.6" width="1.8" height="6" fill="#e3b33d"/><rect x="34.2" y="54" width="2" height="6.6" fill="#3d8fdc"/><rect x="36.7" y="54.8" width="2.2" height="6" fill="#2fae44"/><circle cx="32.2" cy="61" r="2" fill="#3bb54a"/><rect x="44" y="55.4" width="7.4" height="5.6" rx="0.8" fill="#a7a7a7"/><rect x="45.2" y="56.6" width="2.4" height="2.4" fill="#d4d4d4"/><circle cx="49.4" cy="58.6" r="1.2" fill="#eee"/><circle cx="60.5" cy="58.6" r="3.3" fill="#2d8fd8"/><path d="M56.6 54.6 L59.5 57" stroke="#2d8fd8" stroke-width="1.2"/><circle cx="61.3" cy="59.4" r="1" fill="#eaf6ff"/><circle cx="57" cy="61" r="2" fill="#3bb54a"/><circle cx="72.2" cy="56.8" r="3.4" fill="#e4b73c" stroke="#b08818" stroke-width="0.6"/><circle cx="72.2" cy="56.8" r="1.3" fill="#f3d68a"/><circle cx="69" cy="61" r="2" fill="#3bb54a"/><path d="M79.3 53.6 V63" stroke="#aeb6c4" stroke-width="0.6"/><path d="M86 55 H89.5 L90.3 55.9 H93 V62 H86 Z" fill="#d2893a"/><rect x="83.6" y="57.2" width="5.4" height="5" fill="#3a6fb0"/><path d="M86.3 57.2 V62.2 M83.6 59.7 H89" stroke="#cfe3f7" stroke-width="0.5"/><path d="M98 54.2 H103.6 L105 55.6 V62 H98 Z" fill="#4d90cf"/><rect x="99.4" y="54.2" width="3" height="2.2" fill="#e8f2fb"/><rect x="96.2" y="58" width="4.4" height="4.2" fill="#2e5f99"/><circle cx="102.4" cy="59.8" r="0.9" fill="#f6f0a0"/><rect x="111.4" y="54.2" width="5.8" height="5" fill="#5b88c5" stroke="#2f5c95" stroke-width="0.5"/><path d="M112.6 56.6 H116.2 M114.4 54.6 V59" stroke="#d7e8fb" stroke-width="0.5"/><path d="M108.6 57.4 L113.2 62.2 M113.2 57.4 L108.6 62.2" stroke="#e8262a" stroke-width="1.4"/><path d="M121 53.6 V63" stroke="#aeb6c4" stroke-width="0.6"/><path d="M124.6 55 H129.4 L132.6 57.6 V61.2 H124.6 Z" fill="#b9b9b9"/><path d="M127 61.2 V62.6 M130 61.2 V62.6" stroke="#9a9a9a" stroke-width="0.8"/><path d="M137.4 54.4 H142 L144.8 57 V62.4 H137.4 Z" fill="#c4c4c4"/><path d="M138.4 59 H144 M140.6 57.6 V62.4" stroke="#a6a6a6" stroke-width="0.6"/></svg><svg style="position:absolute;left:160px;top:65px" width="28" height="14" viewBox="160 65 28 14"><circle cx="171.6" cy="70.4" r="2.7" fill="#dcecf8" stroke="#8cc0e6" stroke-width="0.9"/><path d="M169.6 72.4 L167.6 74.6" stroke="#e0a040" stroke-width="1.3"/><path d="M181.6 68.4 H183.8 V71.6 H181.6 Z M181 71.6 H184.4 M182.7 71.6 V74" fill="none" stroke="#555" stroke-width="0.8"/></svg><svg style="position:absolute;left:0;top:0" width="1000" height="500" viewBox="0 0 1000 500"><path d="M181.4 85 L183.2 83.2 L185 85" fill="none" stroke="#a0a0a0" stroke-width="0.7"/><path d="M181.4 478 L183.2 479.8 L185 478" fill="none" stroke="#a0a0a0" stroke-width="0.7"/><path d="M8.4 486.4 L6.6 488.2 L8.4 490" fill="none" stroke="#a0a0a0" stroke-width="0.7"/><path d="M172.4 486.4 L174.2 488.2 L172.4 490" fill="none" stroke="#a0a0a0" stroke-width="0.7"/><path d="M990.4 62.8 L992.2 61 L994 62.8" fill="none" stroke="#a0a0a0" stroke-width="0.7"/><rect x="988.4" y="53.6" width="7.4" height="3" fill="#e4e4e4" stroke="#bdbdbd" stroke-width="0.5"/><path d="M990.4 476 L992.2 477.8 L994 476" fill="none" stroke="#a0a0a0" stroke-width="0.7"/><path d="M196.6 484 L194.8 485.8 L196.6 487.6" fill="none" stroke="#a0a0a0" stroke-width="0.7"/><path d="M982.4 484 L984.2 485.8 L982.4 487.6" fill="none" stroke="#a0a0a0" stroke-width="0.7"/></svg><svg style="position:absolute;left:988px;top:43px" width="9" height="7" viewBox="988 43 9 7"><path d="M990.8 45.6 H994.2 L992.5 47.6 Z" fill="#e8edf5"/><path d="M990.8 44.6 H994.2" stroke="#e8edf5" stroke-width="0.6"/></svg><div id="bluebar"></div><div id="taskbar"><div id="search"><div class="tx">Type here to search</div></div></div><svg style="position:absolute;left:0;top:508px" width="1000" height="22" viewBox="0 508 1000 22"><path d="M8.2 515.4 L12.2 514.9 V518.6 H8.2 Z M12.9 514.8 L17.4 514.2 V518.6 H12.9 Z M8.2 519.3 H12.2 V523 L8.2 522.5 Z M12.9 519.3 H17.4 V523.6 L12.9 523.1 Z" fill="#fff"/><circle cx="37.4" cy="518.4" r="2.9" fill="none" stroke="#555" stroke-width="0.8"/><path d="M35.3 520.5 L32.6 523.2" stroke="#555" stroke-width="0.9"/><circle cx="224.2" cy="519.2" r="3.7" fill="none" stroke="#e8e8e8" stroke-width="1.1"/><rect x="246" y="516" width="5.6" height="6.4" fill="none" stroke="#d8d8d8" stroke-width="0.9"/><path d="M245.6 514.6 H252 M245.6 523.8 H252" stroke="#d8d8d8" stroke-width="0.8"/><rect x="253" y="515.4" width="2" height="1.6" fill="#d8d8d8"/><rect x="253" y="518.2" width="2" height="1.6" fill="#d8d8d8"/><rect x="253" y="521" width="2" height="1.6" fill="#d8d8d8"/><defs><linearGradient id="edg" x1="0" y1="0" x2="1" y2="1"><stop offset="0" stop-color="#35c1f1"/><stop offset="0.55" stop-color="#1f8fdc"/><stop offset="1" stop-color="#0c59a4"/></linearGradient><linearGradient id="edg2" x1="0" y1="0" x2="1" y2="0"><stop offset="0" stop-color="#2fbfd0"/><stop offset="1" stop-color="#66d86a"/></linearGradient></defs><circle cx="277.8" cy="519.2" r="6.6" fill="url(#edg)"/><path d="M272.6 515.4 Q275.6 511.8 279.8 512.8 Q284.2 514 284.4 518.6 Q284.4 521 282.2 521.2 Q279.6 521.2 280.4 518.8 Q280.8 516.6 277.6 516.2 Q274.4 516 272.6 515.4 Z" fill="url(#edg2)"/><path d="M276.8 517.4 Q273.6 518.2 274.2 521.6 Q275 524.6 279 525 Q276.4 523.4 276.6 520.8 Q276.8 518.8 279.4 518 Z" fill="#0b3f82"/><path d="M298 514.6 H302 L303 515.6 H310 V524.4 H298 Z" fill="#f2c744"/><rect x="298" y="516.6" width="12" height="7.8" fill="#ffd95a"/><rect x="301.6" y="519.6" width="5" height="3.6" fill="#2b7ad0"/><rect x="302.8" y="521.2" width="2.6" height="2" fill="#ffd95a"/><path d="M326.4 513.6 L333.6 513 V525.6 L326.4 525 Z" fill="#c8ccd4"/><path d="M330 515.8 L331.6 518.4 H328.4 Z" fill="#e8c13a"/><circle cx="330" cy="521.2" r="1.3" fill="#e0485a"/><path d="M352 515 L359 512.6 L362.4 523.2 L355.4 525.4 Z" fill="#bfe3ef"/><path d="M352 515 L355.4 525.4 L354 525.8 L350.8 516 Z" fill="#6aa6c0"/><rect x="370.2" y="508" width="26.6" height="22" fill="#35434a"/><path d="M379 513 L389.4 512.4 L390.6 523.6 L380.4 525.4 L377 522.6 L377.4 515 Z" fill="#c04ff0"/><path d="M383 512.4 L389.4 512.4 L390.6 523.6 L383 525.6 Z" fill="#3aa0f0" opacity="0.8"/><rect x="379.4" y="515.2" width="8.6" height="8.6" fill="#151021"/><path d="M380.4 516.2 H384.6 V517.6 H380.4 Z M380.4 521.6 H382.6 V522.4 H380.4 Z" fill="#fff"/><path d="M267 529.3 H289 M293 529.3 H315 M320 529.3 H341 M346 529.3 H367" stroke="#8fc4ee" stroke-width="1.4"/><path d="M371 529.3 H396.6" stroke="#8fc4ee" stroke-width="1.4"/><path d="M869.4 520 L872.6 516.8 L875.8 520" fill="none" stroke="#e0e0e0" stroke-width="0.9"/><path d="M883 517 H888 V521 H883 Z M884 514.4 H887 V516.4 H884 Z M883.6 523 H887.4" fill="none" stroke="#d8d8d8" stroke-width="0.7"/><rect x="894.6" y="516.4" width="7.4" height="5" fill="none" stroke="#d8d8d8" stroke-width="0.8"/><path d="M898.3 521.4 V523.2 M896.4 523.2 H900.2" stroke="#d8d8d8" stroke-width="0.7"/><path d="M893 516 H895 V518 H893 Z" fill="#d8d8d8"/><path d="M906.4 517.8 H908 L910.4 516 V522.6 L908 520.8 H906.4 Z" fill="none" stroke="#d8d8d8" stroke-width="0.7"/><path d="M911.8 517.6 Q912.8 519.3 911.8 521 M913.4 516.6 Q915 519.3 913.4 522" fill="none" stroke="#d8d8d8" stroke-width="0.7"/><path d="M977.4 514.6 H986.6 V521.2 H982.6 L980.4 523.4 V521.2 H977.4 Z" fill="none" stroke="#e0e0e0" stroke-width="0.8"/><path d="M996.6 509 V530" stroke="#4a5860" stroke-width="0.6"/></svg><div style="left:920.6px;top:514.8px;font-size:6.6px;line-height:7px;color:#e8e8e8;letter-spacing:-0.55px">ENG</div><div style="left:942.2px;top:510.6px;font-size:6.9px;line-height:7px;color:#e8e8e8;letter-spacing:-0.38px">1:44 AM</div><div style="left:939.8px;top:519.6px;font-size:6.9px;line-height:7px;color:#e8e8e8;letter-spacing:-0.28px">4/20/2021</div></div></body></html>
